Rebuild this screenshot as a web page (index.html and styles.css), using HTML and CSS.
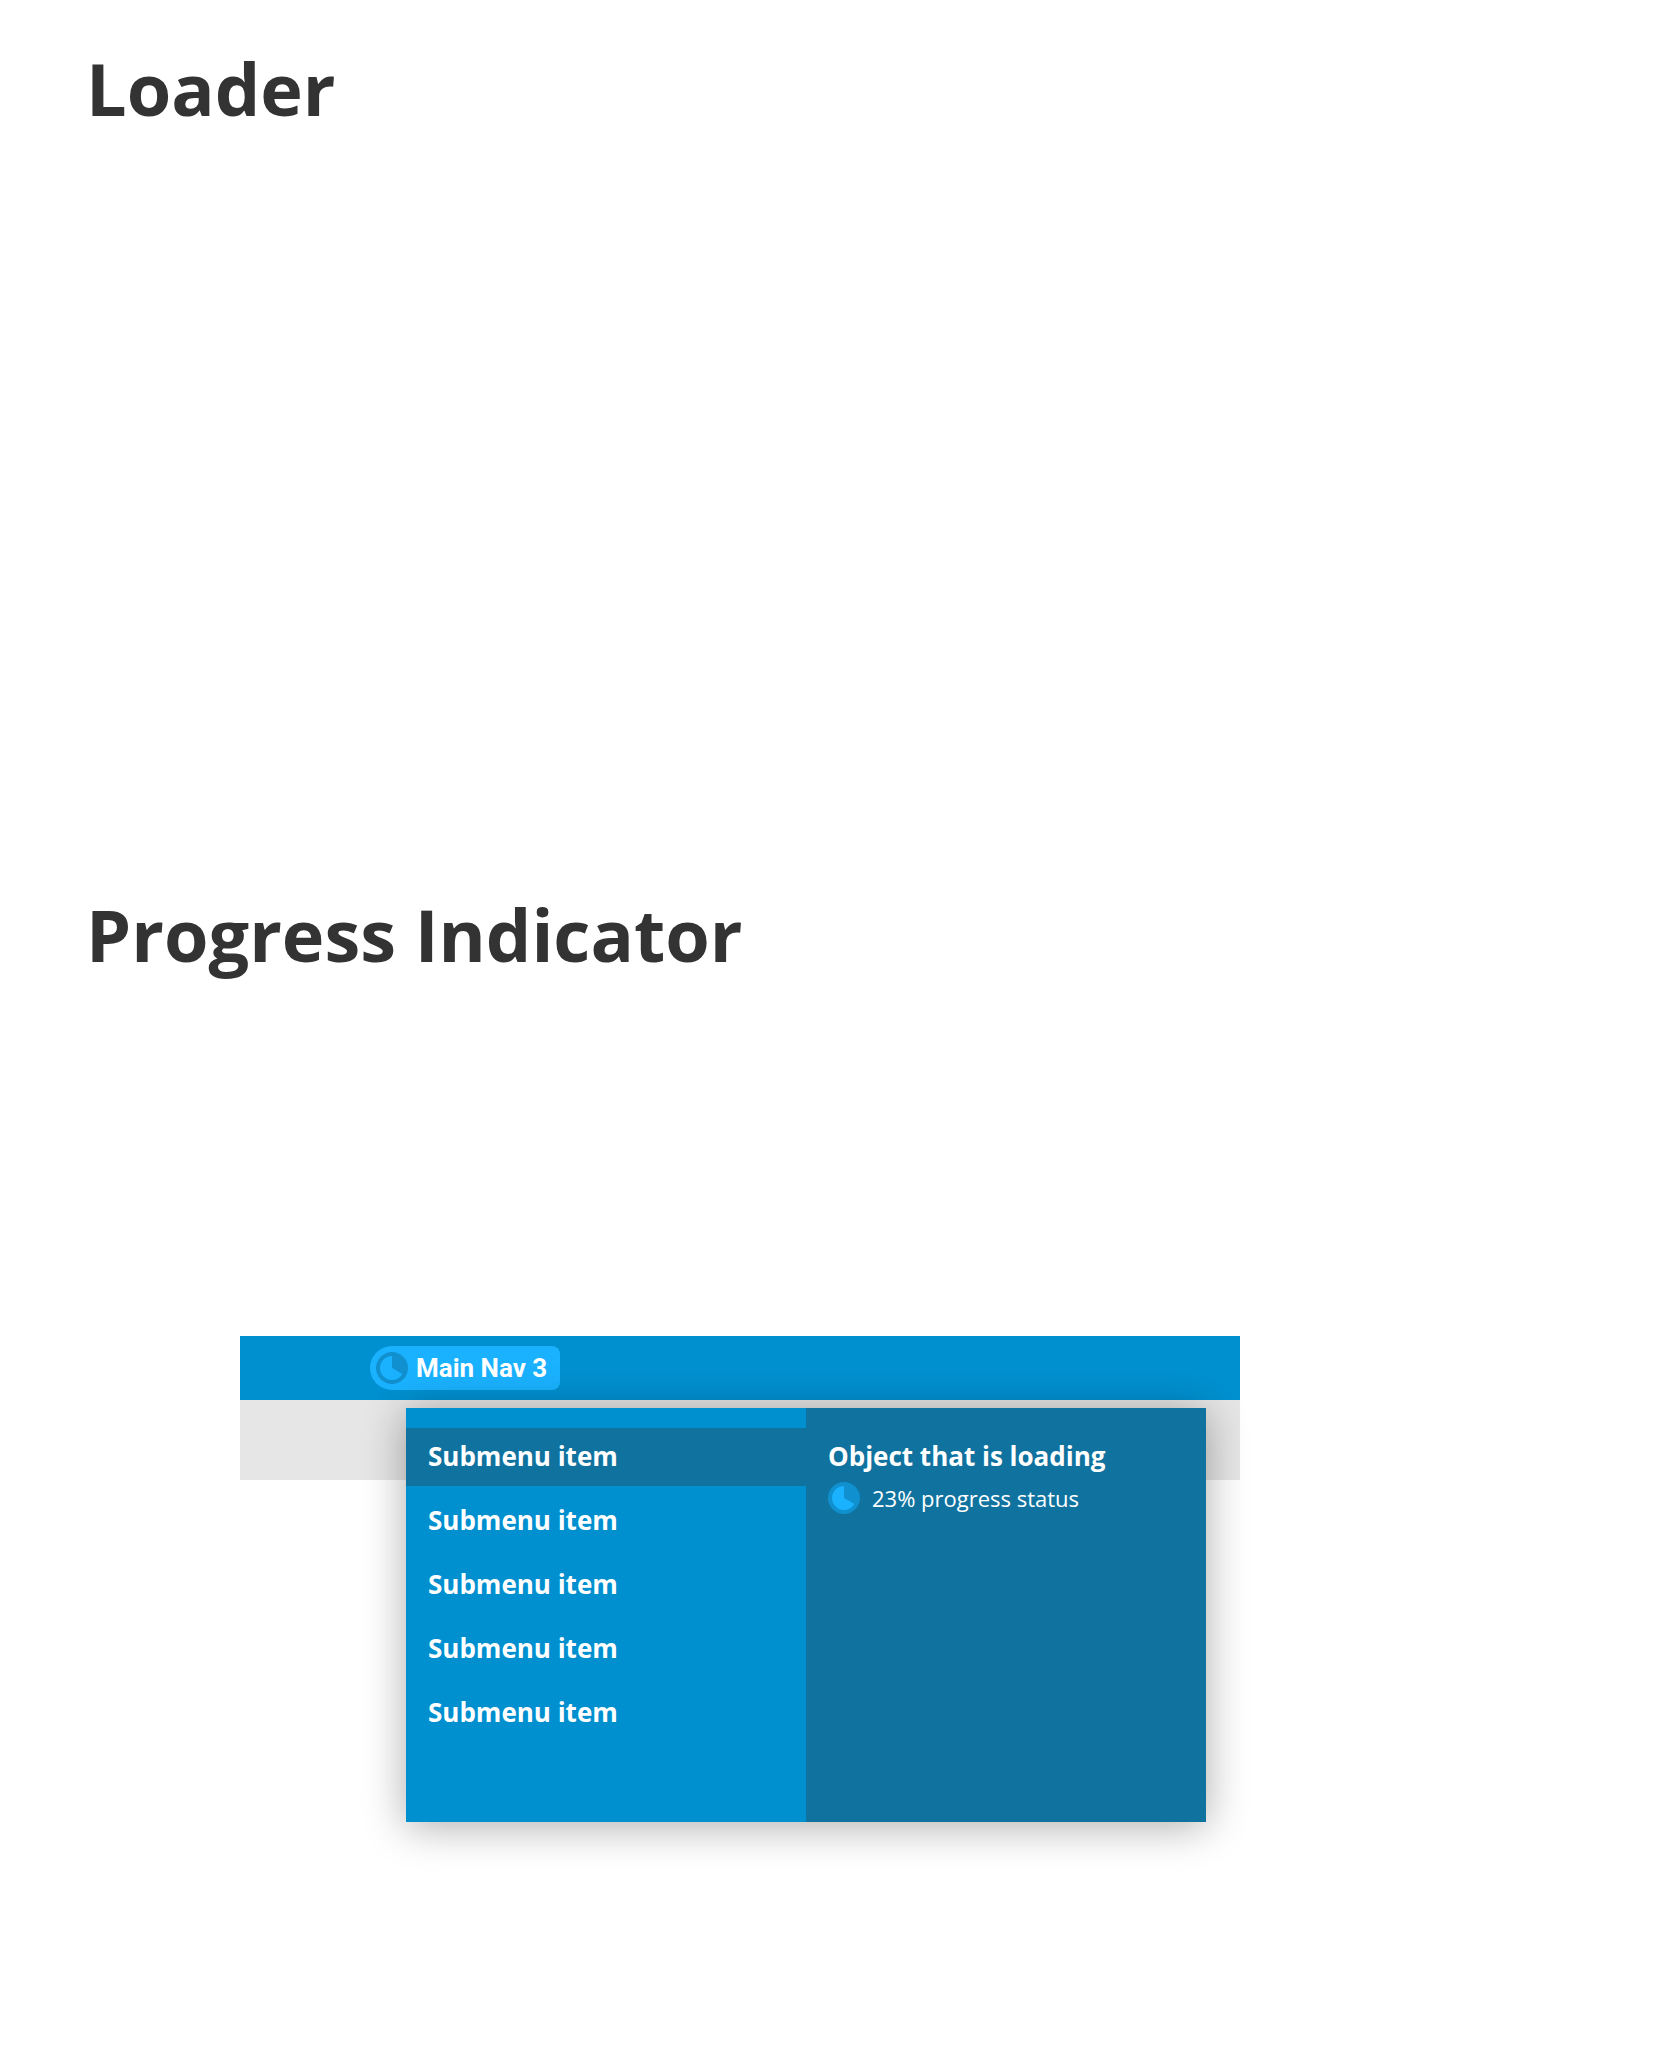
FILE: index.html
```html
<!DOCTYPE html>
<html lang="en">
<head>
<meta charset="utf-8">
<meta name="viewport" content="width=device-width, initial-scale=1">
<title>Loader and Progress Indicator</title>
<link rel="stylesheet" href="styles.css">
</head>
<body>
<main class="page">
  <section class="section">
    <h1 class="title">Loader</h1>
  </section>
  <section class="section">
    <h1 class="title">Progress Indicator</h1>
    <div class="demo">
      <nav class="navbar">
        <button class="nav-button" type="button" aria-expanded="true">
          <svg class="pie" viewBox="0 0 32 32" aria-hidden="true">
            <circle class="pie-track" cx="16" cy="16" r="16"/>
            <path class="pie-fill" d="M16 16V4A12 12 0 1 0 26.4 22Z"/>
          </svg>
          Main Nav 3
        </button>
      </nav>
      <div class="subbar"></div>
      <div class="dropdown">
        <ul class="menu">
          <li><a class="menu-item is-active" href="#">Submenu item</a></li>
          <li><a class="menu-item" href="#">Submenu item</a></li>
          <li><a class="menu-item" href="#">Submenu item</a></li>
          <li><a class="menu-item" href="#">Submenu item</a></li>
          <li><a class="menu-item" href="#">Submenu item</a></li>
        </ul>
        <div class="detail">
          <h2 class="detail-title">Object that is loading</h2>
          <p class="status">
            <svg class="pie" viewBox="0 0 32 32" aria-hidden="true">
              <circle class="pie-track" cx="16" cy="16" r="16"/>
              <path class="pie-fill" d="M16 16V4A12 12 0 1 0 26.4 22Z"/>
            </svg>
            23% progress status
          </p>
        </div>
      </div>
    </div>
  </section>
</main>
</body>
</html>
```
FILE: styles.css
```css
* {
  box-sizing: border-box;
}

body {
  margin: 0;
  background: #fff;
  color: #333;
  font-family: "Open Sans", sans-serif;
}

.page {
  padding: 38px 86px 0;
}

.section {
  min-height: 846px;
}

.section:last-child {
  min-height: 1168px;
}

.title {
  margin: 0;
  font-size: 72px;
  font-weight: 700;
  line-height: 100px;
}

.demo {
  position: relative;
  max-width: 1000px;
  margin: 352px 0 0 154px;
}

.navbar {
  display: flex;
  align-items: center;
  height: 64px;
  padding-left: 130px;
  background: #0090d0;
}

.nav-button {
  display: flex;
  align-items: center;
  gap: 8px;
  height: 44px;
  padding: 0 13px 0 6px;
  border: 0;
  border-radius: 22px 8px 8px 22px;
  background: #1ab2ff;
  color: #fff;
  font: 700 26px/33px Roboto, sans-serif;
  white-space: nowrap;
}

.pie {
  flex: none;
  width: 32px;
  height: 32px;
}

.pie-track {
  fill: #1190d0;
}

.pie-fill {
  fill: #1ab2ff;
}

.subbar {
  height: 80px;
  background: #e6e6e6;
}

.dropdown {
  position: absolute;
  top: 72px;
  left: 166px;
  display: grid;
  grid-template-columns: 1fr 1fr;
  width: 80%;
  min-height: 414px;
  box-shadow: 0 4px 40px rgba(0, 0, 0, 0.33);
  color: #fff;
}

.menu {
  display: flex;
  flex-direction: column;
  gap: 6px;
  margin: 0;
  padding: 20px 0;
  background: #0090d0;
  list-style: none;
}

.menu-item {
  display: block;
  padding: 10px 22px 12px;
  color: #fff;
  font-size: 26px;
  font-weight: 700;
  line-height: 36px;
  text-decoration: none;
}

.menu-item.is-active {
  background: #10739f;
}

.detail {
  padding: 30px 22px;
  background: #10739f;
}

.detail-title {
  margin: 0;
  font-size: 26px;
  font-weight: 700;
  line-height: 36px;
}

.status {
  display: flex;
  align-items: center;
  gap: 12px;
  margin: 8px 0 0;
  font-size: 22px;
  line-height: 30px;
}
```
